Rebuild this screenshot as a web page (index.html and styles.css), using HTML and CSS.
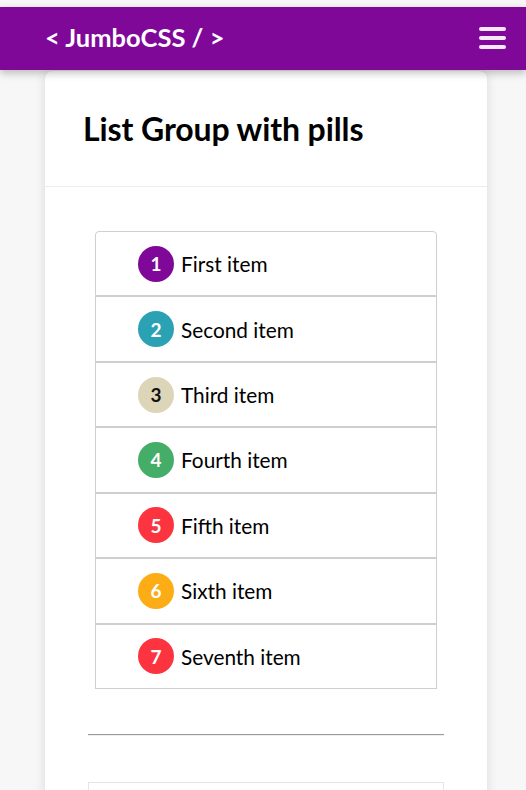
FILE: index.html
```html
<!DOCTYPE html>
<html lang="en">
<head>
<meta charset="utf-8">
<title>JumboCSS - List Group with pills</title>
<link rel="stylesheet" href="styles.css">
</head>
<body>
<nav class="navbar">
  <a class="brand" href="#">&lt; JumboCSS / &gt;</a>
  <button class="menu" aria-label="Menu">
    <span class="bar"></span><span class="bar"></span><span class="bar"></span>
  </button>
</nav>
<main class="card">
  <header class="card-header">
    <h1 class="title">List Group with pills</h1>
  </header>
  <section class="card-body">
    <ul class="list-group">
      <li class="item"><span class="pill pill-purple">1</span>First item</li>
      <li class="item"><span class="pill pill-teal">2</span>Second item</li>
      <li class="item"><span class="pill pill-beige">3</span>Third item</li>
      <li class="item"><span class="pill pill-green">4</span>Fourth item</li>
      <li class="item"><span class="pill pill-red">5</span>Fifth item</li>
      <li class="item"><span class="pill pill-orange">6</span>Sixth item</li>
      <li class="item"><span class="pill pill-red">7</span>Seventh item</li>
    </ul>
    <hr class="divider">
    <div class="code-box"></div>
  </section>
</main>
</body>
</html>
```
FILE: styles.css
```css
html, body {
  margin: 0;
  padding: 0;
}
body {
  background: #f7f7f7;
  font-family: Lato, "Noto Sans", sans-serif;
  color: #111;
  padding-top: 7px;
  overflow: hidden;
  height: 790px;
  box-sizing: border-box;
}
.navbar {
  height: 63px;
  background: #7f0899;
  display: flex;
  align-items: center;
  justify-content: space-between;
  padding: 0 20px 0 45px;
  box-shadow: 0 3px 8px rgba(0,0,0,0.25);
  position: relative;
  z-index: 2;
}
.brand {
  color: #fff;
  text-decoration: none;
  font-weight: 700;
  font-size: 25.5px;
  padding-bottom: 3px;
}
.menu {
  background: none;
  border: 0;
  padding: 0;
  width: 27px;
  display: flex;
  flex-direction: column;
  gap: 5.5px;
  margin-top: -1px;
}
.bar {
  display: block;
  height: 3.5px;
  border-radius: 2px;
  background: #f6e8f8;
}
.card {
  margin: 1px 0 0 45px;
  width: 442px;
  background: #fff;
  border-radius: 8px 8px 0 0;
  box-shadow: 0 0 12px rgba(0,0,0,0.12);
  min-height: 760px;
}
.card-header {
  height: 115px;
  border-bottom: 1px solid #ececec;
  display: flex;
  align-items: center;
  padding: 0 38px;
}
.title {
  margin: 0;
  font-size: 32px;
  font-weight: 700;
  color: #000;
  letter-spacing: -0.1px;
  padding-bottom: 1px;
}
.card-body {
  padding: 44px 43px 0;
}
.list-group {
  list-style: none;
  margin: 0 7px;
  padding: 0;
}
.item {
  height: 63.43px;
  border: 1px solid #cfcfcf;
  display: flex;
  align-items: center;
  padding-left: 42px;
  font-size: 20.8px;
  color: #000;
}
.item:first-child {
  border-radius: 4px 4px 0 0;
}
.pill {
  width: 36px;
  height: 36px;
  border-radius: 50%;
  display: flex;
  align-items: center;
  justify-content: center;
  color: #fff;
  font-weight: 700;
  font-size: 19px;
  margin-right: 7px;
}
.pill-purple { background: #7f0899; }
.pill-teal { background: #2ba1b4; }
.pill-beige { background: #dcd5b8; color: #111; }
.pill-green { background: #44ae69; }
.pill-red { background: #fc343f; }
.pill-orange { background: #fcac14; }
.divider {
  margin: 45px 0 0;
  border: 0;
  border-top: 1px solid #9a9a9a;
  border-bottom: 1px solid #eeeeee;
}
.code-box {
  margin-top: 46px;
  height: 60px;
  border: 1px solid #e5e5e5;
}
```
